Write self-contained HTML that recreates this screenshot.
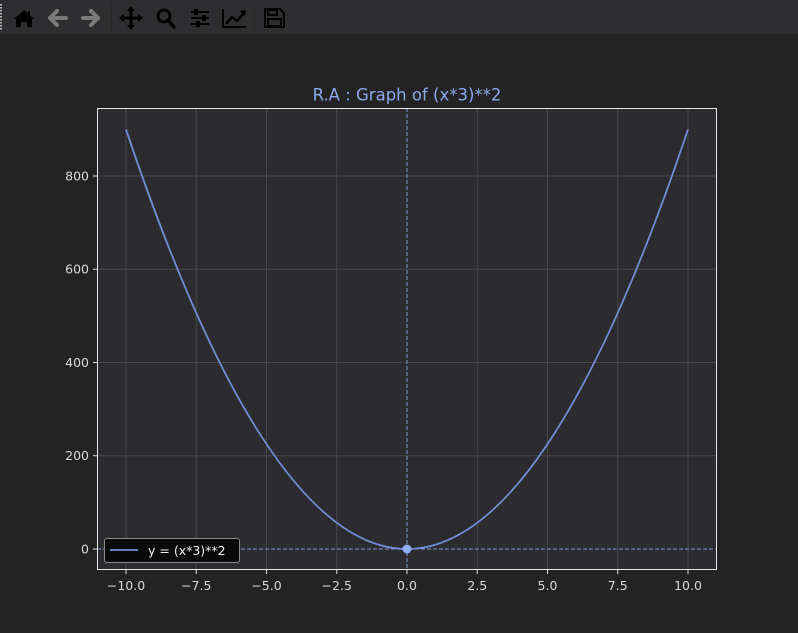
<!DOCTYPE html>
<html><head><meta charset="utf-8"><style>
html,body{margin:0;padding:0;background:#232323;width:798px;height:633px;overflow:hidden;font-family:"DejaVu Sans","Liberation Sans",sans-serif}
</style></head><body>
<svg width="798" height="633" xmlns="http://www.w3.org/2000/svg" style="position:absolute;left:0;top:0">
<rect x="0" y="0" width="798" height="34" fill="#2e2e30"/>
<line x1="1" y1="4" x2="1" y2="30" stroke="#bbb" stroke-width="2" stroke-dasharray="1.5,1.5"/>
<path d="M24 10 L14 19 L16 19 L16 27 L21 27 L21 22 L27 22 L27 27 L32 27 L32 19 L34 19 L30 15.5 L30 11 L28 11 L28 13.5 Z" fill="#000"/>
<path d="M57 11 L50 18 L57 25 M50 18 L66 18" stroke="#7a7a7a" stroke-width="4" fill="none" stroke-linecap="round" stroke-linejoin="round"/>
<path d="M91 11 L98 18 L91 25 M98 18 L83 18" stroke="#7a7a7a" stroke-width="4" fill="none" stroke-linecap="round" stroke-linejoin="round"/>
<line x1="111.5" y1="4" x2="111.5" y2="31" stroke="#262626"/>
<path d="M131 8 V28 M121 18 H141" stroke="#000" stroke-width="3"/>
<path d="M131 6 L127 11 H135Z M131 30 L127 25 H135Z M119 18 L124 14 V22Z M143 18 L138 14 V22Z" fill="#000"/>
<circle cx="164" cy="16" r="6" stroke="#000" stroke-width="3" fill="none"/>
<path d="M168 20 L174 27" stroke="#000" stroke-width="3.5" stroke-linecap="round"/>
<path d="M191 12 H209 M191 18 H209 M191 24 H209" stroke="#000" stroke-width="2"/>
<rect x="194" y="9" width="4" height="6" fill="#000"/><rect x="202" y="15" width="4" height="6" fill="#000"/><rect x="196" y="21" width="4" height="6" fill="#000"/>
<path d="M223 9 V27 H246" stroke="#000" stroke-width="2" fill="none"/>
<path d="M226 24 L232 17 L237 21 L245 12" stroke="#000" stroke-width="2.5" fill="none"/>
<path d="M246 10 L240 11 L245 16Z" fill="#000"/>
<line x1="254.5" y1="4" x2="254.5" y2="31" stroke="#262626"/>
<path d="M265 9 H280 L284 13 V27 H265 Z" fill="none" stroke="#000" stroke-width="2"/>
<rect x="268" y="10" width="9" height="5" fill="none" stroke="#000" stroke-width="2"/>
<rect x="268" y="19" width="13" height="7" fill="none" stroke="#000" stroke-width="2"/>

<rect x="97" y="108" width="620" height="462" fill="#2c2c30"/>
<g stroke="#46464c" stroke-width="1">
<line x1="126" y1="108" x2="126" y2="570"/><line x1="196.25" y1="108" x2="196.25" y2="570"/><line x1="266.5" y1="108" x2="266.5" y2="570"/><line x1="336.75" y1="108" x2="336.75" y2="570"/><line x1="477.25" y1="108" x2="477.25" y2="570"/><line x1="547.5" y1="108" x2="547.5" y2="570"/><line x1="617.75" y1="108" x2="617.75" y2="570"/><line x1="688" y1="108" x2="688" y2="570"/>
<line x1="97" y1="176" x2="717" y2="176"/><line x1="97" y1="269.25" x2="717" y2="269.25"/><line x1="97" y1="362.5" x2="717" y2="362.5"/><line x1="97" y1="455.75" x2="717" y2="455.75"/>
</g>
<line x1="407" y1="108" x2="407" y2="570" stroke="#7f9ad0" stroke-dasharray="4,2"/>
<line x1="97" y1="549" x2="717" y2="549" stroke="#7f9ad0" stroke-dasharray="4,2"/>
<path d="M126 129.4 Q407 968.6 688 129.4" stroke="#6f8fd8" stroke-width="1.8" fill="none"/>
<circle cx="407" cy="549" r="4.5" fill="#8fb0f5"/>
<rect x="97.5" y="108.5" width="619" height="461" fill="none" stroke="#e8e8e8" stroke-width="1"/>
<g stroke="#e0e0e0"><line x1="93" y1="176" x2="97" y2="176"/><line x1="93" y1="269.25" x2="97" y2="269.25"/><line x1="93" y1="362.5" x2="97" y2="362.5"/><line x1="93" y1="455.75" x2="97" y2="455.75"/><line x1="93" y1="549" x2="97" y2="549"/>
<line x1="126" y1="570" x2="126" y2="574"/><line x1="196.25" y1="570" x2="196.25" y2="574"/><line x1="266.5" y1="570" x2="266.5" y2="574"/><line x1="336.75" y1="570" x2="336.75" y2="574"/><line x1="407" y1="570" x2="407" y2="574"/><line x1="477.25" y1="570" x2="477.25" y2="574"/><line x1="547.5" y1="570" x2="547.5" y2="574"/><line x1="617.75" y1="570" x2="617.75" y2="574"/><line x1="688" y1="570" x2="688" y2="574"/></g>
<g fill="#d8d8d8" font-size="12.5" font-family="DejaVu Sans, sans-serif">
<g text-anchor="end"><text x="89" y="180.5">800</text><text x="89" y="273.5">600</text><text x="89" y="367">400</text><text x="89" y="460">200</text><text x="89" y="553.5">0</text></g>
<g text-anchor="middle"><text x="126" y="590">−10.0</text><text x="196.25" y="590">−7.5</text><text x="266.5" y="590">−5.0</text><text x="336.75" y="590">−2.5</text><text x="407" y="590">0.0</text><text x="477.25" y="590">2.5</text><text x="547.5" y="590">5.0</text><text x="617.75" y="590">7.5</text><text x="688" y="590">10.0</text></g>
</g>
<text x="407" y="100.5" text-anchor="middle" fill="#8aaaf0" font-size="16.5" font-family="DejaVu Sans, sans-serif">R.A : Graph of (x*3)**2</text>
<rect x="104.5" y="538.5" width="135" height="24" rx="2.5" fill="#0a0a0a" stroke="#8a8a8a"/>
<line x1="110" y1="550" x2="138" y2="550" stroke="#6f8fd8" stroke-width="1.8"/>
<text x="148" y="555" fill="#f0f0f0" font-size="12.5" font-family="DejaVu Sans, sans-serif">y = (x*3)**2</text>
</svg>
</body></html>
